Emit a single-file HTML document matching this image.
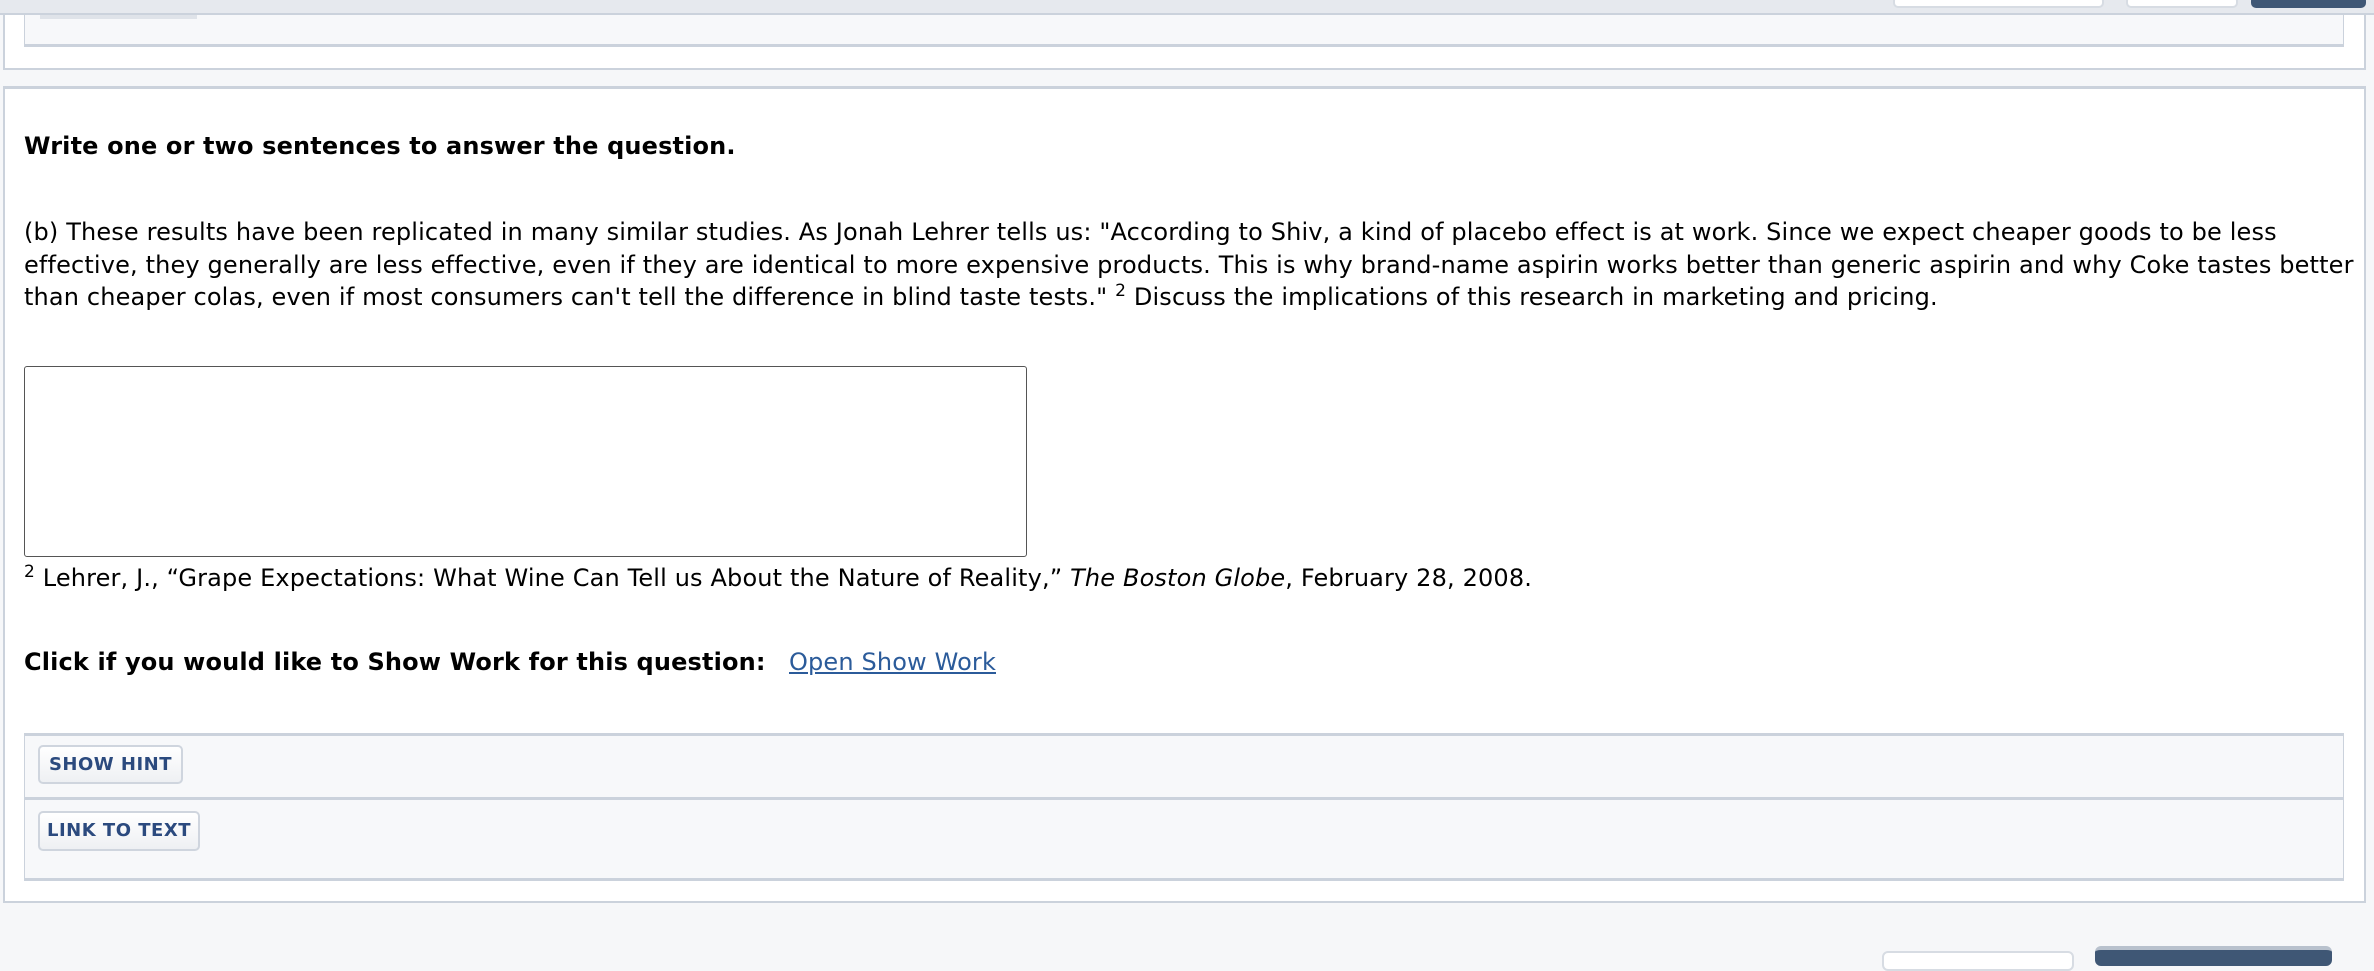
<!DOCTYPE html>
<html><head><style>
*{box-sizing:border-box;margin:0;padding:0}
body{width:2374px;height:960px;overflow:hidden;background:#f6f7f9;font-family:"DejaVu Sans","Liberation Sans",sans-serif;color:#000;position:relative}
.abs{position:absolute}
.t{position:absolute;white-space:nowrap;font-size:24px;left:24px;letter-spacing:0.15px}
sup{font-size:17px;line-height:0;vertical-align:0;position:relative;top:-9px}
.btn{position:absolute;background:linear-gradient(#fff,#eef0f3);border:2px solid #cfd5de;border-radius:5px;color:#2b4a7e;font-weight:bold;font-size:18px;text-align:center;letter-spacing:0.5px}
</style></head><body>
<div class="abs" style="left:0;top:0;width:2374px;height:15px;background:#e6e9ee;border-bottom:2px solid #cbd2dc"></div>
<div class="abs" style="left:1893px;top:-4px;width:211px;height:12px;background:#fff;border:2px solid #d7dce3;border-radius:5px"></div>
<div class="abs" style="left:2126px;top:-4px;width:112px;height:12px;background:#fff;border:2px solid #d7dce3;border-radius:5px"></div>
<div class="abs" style="left:2251px;top:-4px;width:115px;height:12px;background:#3f5775;border-radius:5px"></div>
<div class="abs" style="left:3px;top:15px;width:2363px;height:55px;background:#fff;border:2px solid #cbd2dc;border-top:none"></div>
<div class="abs" style="left:24px;top:15px;width:2320px;height:32px;background:#f7f8fa;border:1px solid #cbd2dc;border-top:none;border-bottom:3px solid #cbd2dc"></div>
<div class="abs" style="left:40px;top:15px;width:157px;height:4px;background:#dfe3e9"></div>

<div class="abs" style="left:3px;top:86px;width:2363px;height:817px;background:#fff;border:2px solid #cbd2dc;border-top:3px solid #cbd2dc"></div>
<div class="t" style="top:132px;font-weight:bold">Write one or two sentences to answer the question.</div>
<div class="t" style="top:216px;line-height:32.5px">(b) These results have been replicated in many similar studies. As Jonah Lehrer tells us: "According to Shiv, a kind of placebo effect is at work. Since we expect cheaper goods to be less<br>effective, they generally are less effective, even if they are identical to more expensive products. This is why brand-name aspirin works better than generic aspirin and why Coke tastes better<br>than cheaper colas, even if most consumers can't tell the difference in blind taste tests." <sup>2</sup> Discuss the implications of this research in marketing and pricing.</div>
<div class="abs" style="left:24px;top:366px;width:1003px;height:191px;border:1px solid #555;border-radius:3px;background:#fff"></div>
<div class="t" style="top:564px"><sup>2</sup> Lehrer, J., “Grape Expectations: What Wine Can Tell us About the Nature of Reality,” <i>The Boston Globe</i>, February 28, 2008.</div>
<div class="t" style="top:648px;font-weight:bold">Click if you would like to Show Work for this question:</div>
<div class="t" style="top:648px;left:789px;color:#2b5b9a;text-decoration:underline">Open Show Work</div>

<div class="abs" style="left:24px;top:733px;width:2320px;height:148px;background:#f7f8fa;border:1px solid #cbd2dc;border-top:3px solid #cbd2dc;border-bottom:3px solid #cbd2dc"></div>
<div class="abs" style="left:25px;top:797px;width:2318px;height:3px;background:#cbd2dc"></div>
<div class="btn" style="left:38px;top:745px;width:145px;height:39px;line-height:35px">SHOW HINT</div>
<div class="btn" style="left:38px;top:811px;width:162px;height:40px;line-height:36px">LINK TO TEXT</div>

<div class="abs" style="left:1882px;top:951px;width:192px;height:20px;background:#fff;border:2px solid #d7dce3;border-radius:6px"></div>
<div class="abs" style="left:2095px;top:946px;width:237px;height:20px;background:#3f5775;border-top:4px solid #b8c1cd;border-radius:6px"></div>
</body></html>
